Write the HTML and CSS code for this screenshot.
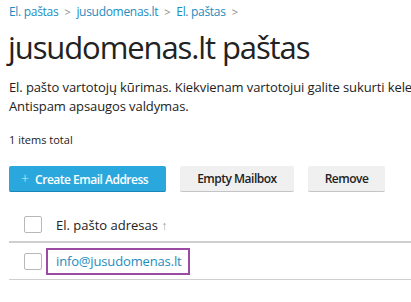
FILE: index.html
```html
<!DOCTYPE html>
<html lang="lt">
<head>
  <meta name="viewport" content="width=device-width, initial-scale=1">
  <link rel="stylesheet" href="styles.css">
</head>
<body>
  <div class="page">
    <nav class="breadcrumbs">
      <a href="#">El. paštas</a>
      <span class="sep">&gt;</span>
      <a href="#">jusudomenas.lt</a>
      <span class="sep">&gt;</span>
      <a href="#">El. paštas</a>
      <span class="sep">&gt;</span>
    </nav>

    <h1 class="page-title">jusudomenas.lt paštas</h1>

    <p class="hint">El. pašto vartotojų kūrimas. Kiekvienam vartotojui galite sukurti keletą<br>Antispam apsaugos valdymas.</p>

    <div class="total">1 items total</div>

    <div class="toolbar">
      <button class="btn btn-primary"><span class="plus">+</span> Create Email Address</button>
      <button class="btn">Empty Mailbox</button>
      <button class="btn">Remove</button>
    </div>

    <div class="list">
      <div class="row row-head">
        <span class="check"></span>
        <span class="col-title">El. pašto adresas <span class="sort">&#8593;</span></span>
      </div>
      <div class="row">
        <span class="check"></span>
        <a class="mail highlight" href="#">info@jusudomenas.lt</a>
      </div>
    </div>
  </div>
</body>
</html>
```

FILE: styles.css
```css
:root {
  --text: #222222;
  --link: #1c8dc0;
  --primary: #2aa8de;
  --primary-edge: #1b86b8;
  --btn-bg: #f0f0f0;
  --btn-edge: #c4c4c4;
  --line: #cfcfcf;
  --mark: #9b4ba3;
}

* {
  box-sizing: border-box;
}

html, body {
  margin: 0;
  overflow: hidden;
  background: #ffffff;
}

body {
  font-family: "Open Sans", sans-serif;
  color: var(--text);
}

.page {
  width: 700px;
  padding: 3px 0 0 9px;
}

.breadcrumbs {
  display: flex;
  align-items: center;
  gap: 6px;
  font-size: 12px;
  line-height: 18px;
  letter-spacing: -0.3px;
}

.breadcrumbs a {
  color: var(--link);
  text-decoration: none;
}

.breadcrumbs .sep {
  color: #888888;
  font-size: 11px;
}

.page-title {
  margin: 6px 0 0 -1px;
  font-size: 31px;
  font-weight: 400;
  line-height: 40px;
  letter-spacing: -1.1px;
}

.hint {
  margin: 11px 0 0;
  font-size: 13px;
  line-height: 19px;
  letter-spacing: -0.1px;
}

.total {
  margin-top: 16px;
  font-size: 11px;
  line-height: 16px;
}

.toolbar {
  display: flex;
  gap: 14px;
  margin-top: 18px;
}

.btn {
  height: 26px;
  padding: 0 17px;
  border: 0;
  border-bottom: 1px solid var(--btn-edge);
  border-radius: 2px;
  background: var(--btn-bg);
  color: var(--text);
  font-family: inherit;
  font-size: 12px;
  font-weight: 600;
  letter-spacing: -0.5px;
}

.btn-primary {
  padding: 0 18px 0 12px;
  background: var(--primary);
  border-bottom-color: var(--primary-edge);
  color: #ffffff;
}

.btn-primary .plus {
  font-weight: 300;
  font-size: 14px;
  margin-right: 4px;
  opacity: 0.8;
}

.list {
  width: 402px;
  margin-top: 16px;
}

.row {
  display: flex;
  align-items: center;
  gap: 14px;
  height: 37px;
  padding-left: 15px;
  border-bottom: 1px solid var(--line);
}

.row-head {
  height: 35px;
  border-bottom-width: 2px;
}

.check {
  width: 18px;
  height: 17px;
  border: 1px solid #b8b8b8;
  border-radius: 2px;
  background: #ffffff;
}

.col-title {
  font-size: 13px;
}

.sort {
  color: #999999;
  font-size: 12px;
}

.mail {
  color: var(--link);
  font-size: 13px;
  letter-spacing: -0.15px;
  text-decoration: none;
}

.highlight {
  margin-left: -10px;
  padding: 2px 6px 3px 8px;
  border: 2px solid var(--mark);
}
```
